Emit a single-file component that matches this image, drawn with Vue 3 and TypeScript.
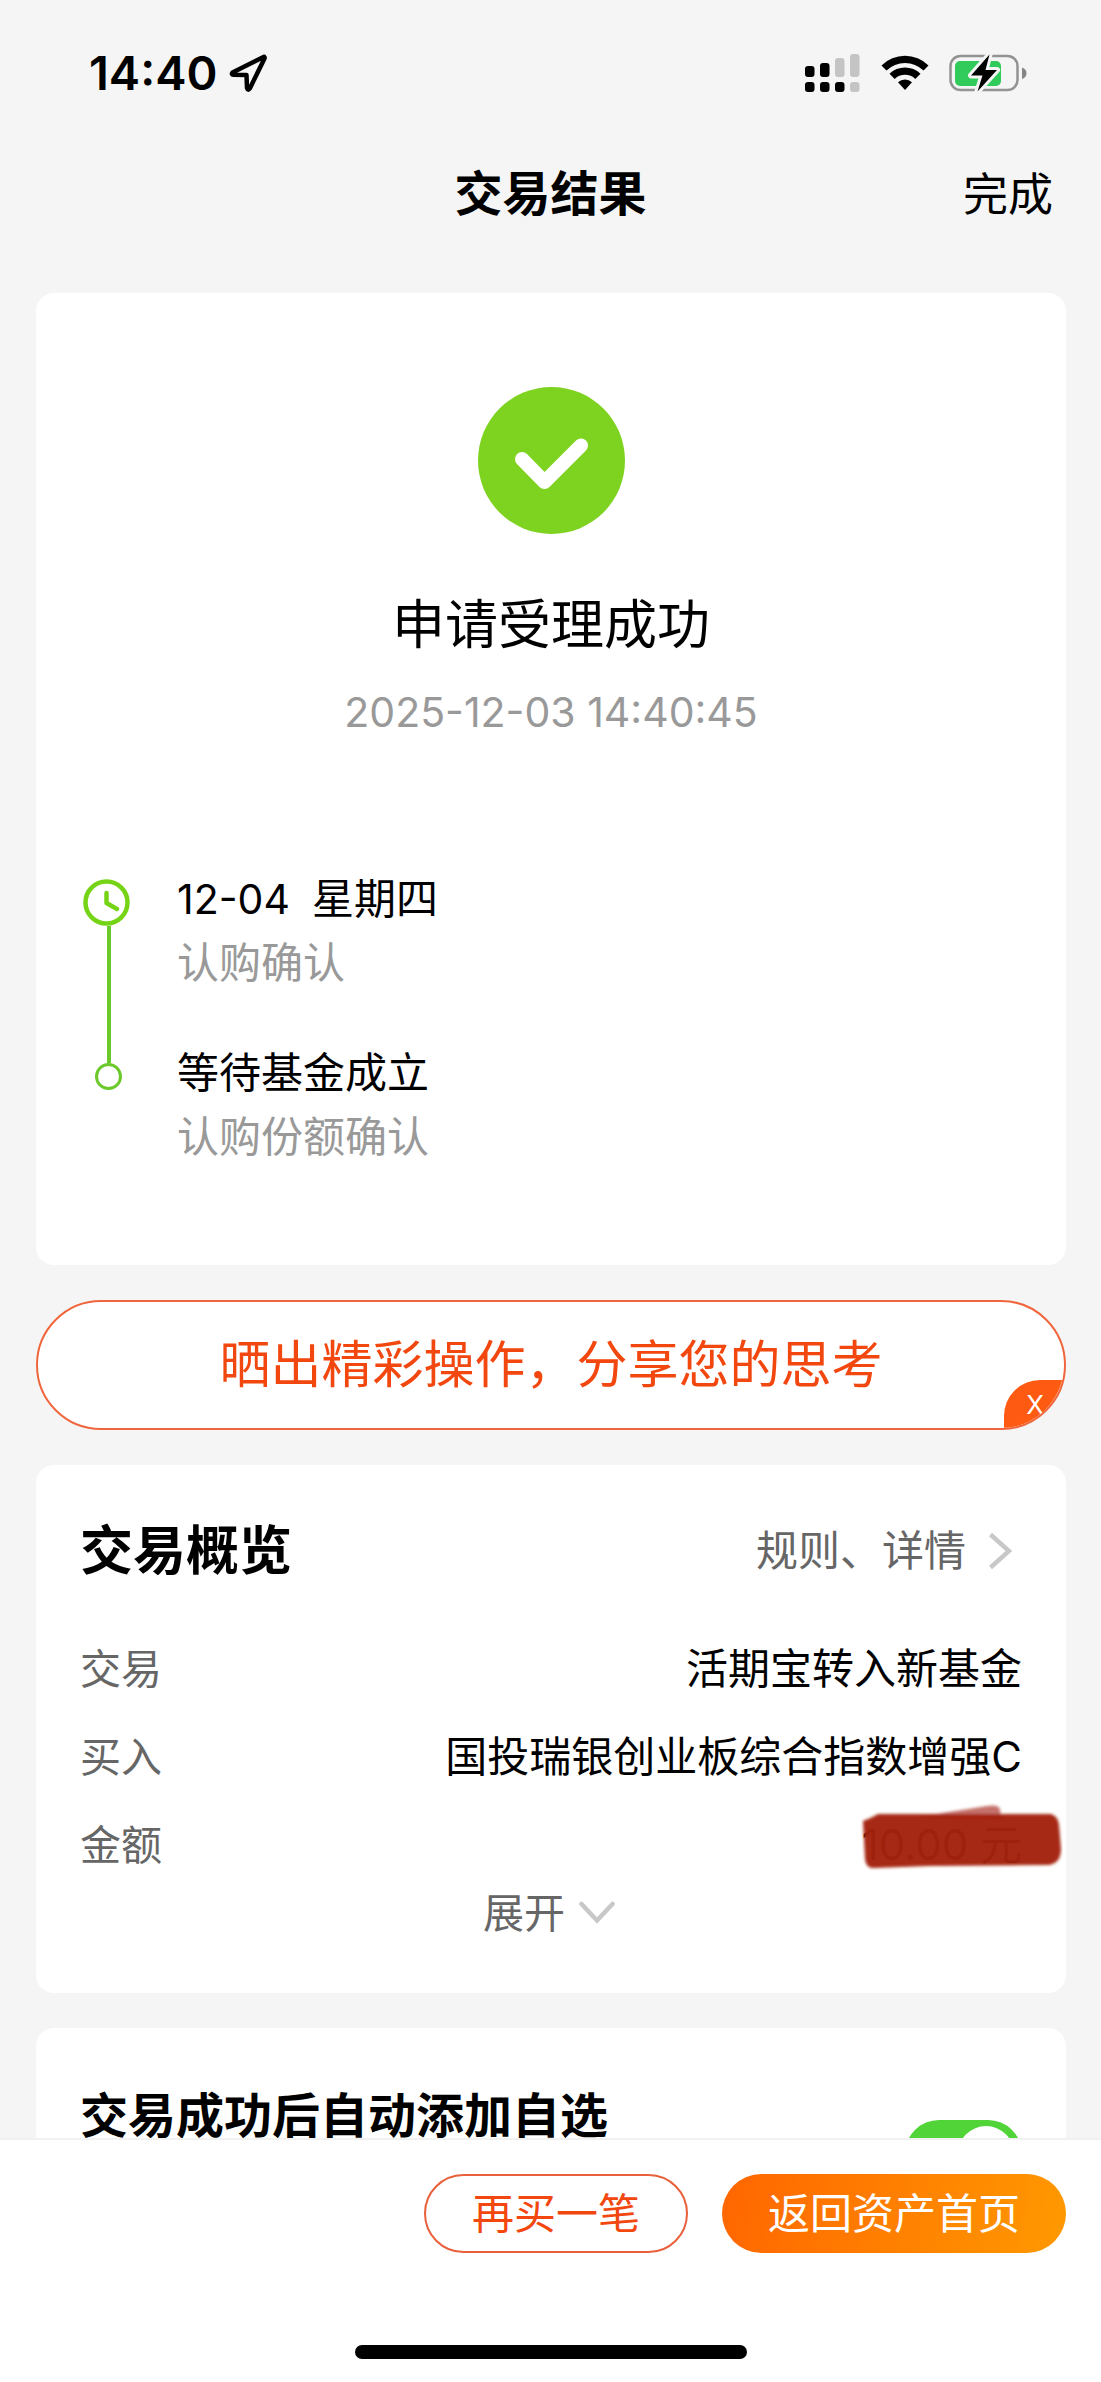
<script setup lang="ts">
import { ref } from 'vue'

interface Step {
  date?: string
  title: string
  note: string
}

interface Detail {
  label: string
  value: string
  masked?: boolean
}

const steps: Step[] = [
  { date: '12-04', title: '星期四', note: '认购确认' },
  { title: '等待基金成立', note: '认购份额确认' },
]

const details: Detail[] = [
  { label: '交易', value: '活期宝转入新基金' },
  { label: '买入', value: '国投瑞银创业板综合指数增强C' },
  { label: '金额', value: '10.00 元', masked: true },
]

const autoAdd = ref(true)
const shareVisible = ref(true)
</script>

<template>
  <div class="screen">
    <div class="status">
      <div class="status-left">
        <span class="clock">14:40</span>
        <svg class="locate" viewBox="0 0 38 38" aria-hidden="true">
          <path d="M34.500 3 L3.500 18.500 Q2 20.500 4.500 20.800 L17.500 21 L18 34 Q19 37 20.800 34.500 L35.500 4.500 Q36 2.500 34.500 3 Z" fill="none" stroke="#000" stroke-width="4.500" stroke-linejoin="round" />
        </svg>
      </div>
      <div class="status-right">
        <svg class="signal" viewBox="0 0 55 40" aria-hidden="true">
          <g fill="#000">
            <rect x="0" y="13" width="9.500" height="11" rx="3" />
            <rect x="15" y="10" width="9.500" height="14" rx="3" />
            <rect x="0" y="29" width="9.500" height="10" rx="3" />
            <rect x="15" y="29" width="9.500" height="10" rx="3" />
            <rect x="30" y="29" width="9.500" height="10" rx="3" />
          </g>
          <g fill="#c4c4c4">
            <rect x="30" y="5" width="9.500" height="19" rx="3" />
            <rect x="45" y="1" width="9.500" height="23" rx="3" />
            <rect x="45" y="29" width="9.500" height="10" rx="3" />
          </g>
        </svg>
        <svg class="wifi" viewBox="0 0 48 36" aria-hidden="true">
          <path d="M0.500 10.500 A33.500 33.500 0 0 1 47.500 10.500 L42.500 15.500 A26.500 26.500 0 0 0 5.500 15.500 Z" />
          <path d="M8.500 18.800 A22 22 0 0 1 39.500 18.800 L34.300 24 A14.700 14.700 0 0 0 13.700 24 Z" />
          <path d="M17 27.200 A10.500 10.500 0 0 1 31 27.200 L24 35 Z" />
        </svg>
        <svg class="battery" viewBox="0 0 78 40" aria-hidden="true">
          <rect x="1.500" y="3" width="67" height="34" rx="10" fill="none" stroke="#939393" stroke-width="2.500" />
          <path d="M73 14.500 Q77.500 16 77.500 20 Q77.500 24.500 73 26 Z" fill="#858585" />
          <rect x="6" y="8" width="46" height="25" rx="5" fill="#30cb5a" />
          <path d="M40.500 1.500 L22 22.500 H33.500 L28.500 38.500 L48 17 H36.500 Z" fill="#000" stroke="#f5f5f5" stroke-width="6" stroke-linejoin="round" paint-order="stroke" />
        </svg>
      </div>
    </div>

    <header class="nav">
      <h1>交易结果</h1>
      <button type="button" class="done">完成</button>
    </header>

    <main class="content">
      <section class="card result">
        <svg class="success" viewBox="0 0 147 147" role="img" aria-label="成功">
          <circle cx="73.500" cy="73.500" r="73.500" fill="#7ed321" />
          <path d="M44 72 L66.500 95 L103 58.500" fill="none" stroke="#fff" stroke-width="14" stroke-linecap="round" stroke-linejoin="round" />
        </svg>
        <h2 class="result-title">申请受理成功</h2>
        <time class="result-time" datetime="2025-12-03T14:40:45">2025-12-03 14:40:45</time>

        <ol class="timeline">
          <li v-for="(step, i) in steps" :key="step.title" class="step">
            <div class="marker" :class="{ first: i === 0 }">
              <template v-if="i === 0">
                <svg class="clock-icon" viewBox="0 0 47 47" aria-hidden="true">
                  <circle cx="23.500" cy="23.500" r="21" fill="none" stroke="#76d416" stroke-width="4.500" />
                  <path d="M23.500 14 V24 L34 30" fill="none" stroke="#76d416" stroke-width="4.500" stroke-linecap="round" stroke-linejoin="round" />
                </svg>
                <span class="line grow"></span>
              </template>
              <template v-else>
                <span class="line lead"></span>
                <span class="dot"></span>
              </template>
            </div>
            <div class="step-text">
              <p class="step-title">
                <span v-if="step.date" class="step-date">{{ step.date }}</span>
                <span>{{ step.title }}</span>
              </p>
              <p class="step-note">{{ step.note }}</p>
            </div>
          </li>
        </ol>
      </section>

      <div v-if="shareVisible" class="share">
        <a href="#share" class="share-link">晒出精彩操作，分享您的思考</a>
        <button type="button" class="share-close" aria-label="关闭" @click="shareVisible = false">X</button>
      </div>

      <section class="card overview">
        <div class="overview-head">
          <h2>交易概览</h2>
          <a href="#rules" class="rules">
            <span>规则、详情</span>
            <svg class="chevron-right" viewBox="0 0 24 38" aria-hidden="true">
              <path d="M2.500 2.500 L21 19 L2.500 35.500" fill="none" stroke="#c8c8c8" stroke-width="4.500" />
            </svg>
          </a>
        </div>
        <dl class="details">
          <div v-for="d in details" :key="d.label" class="detail">
            <dt>{{ d.label }}</dt>
            <dd>
              {{ d.value }}
              <svg v-if="d.masked" class="mask" viewBox="0 0 204 72" aria-hidden="true">
                <defs>
                  <filter id="brush" x="-5%" y="-10%" width="110%" height="120%">
                    <feGaussianBlur stdDeviation="1.500" />
                  </filter>
                </defs>
                <g filter="url(#brush)">
                  <path d="M58 16 L128 5 Q139 3 141 8 L142 18 Z" fill="#c4716a" />
                  <path d="M4 20 Q12 17 19 13 L192 13 Q199 15 200 24 L202 48 Q202 62 190 64 L70 65 L14 67 Q7 67 6 58 Z" fill="#a3220c" fill-opacity="0.970" />
                </g>
              </svg>
            </dd>
          </div>
        </dl>
        <button type="button" class="expand">
          <span>展开</span>
          <svg class="chevron-down" viewBox="0 0 36 24" aria-hidden="true">
            <path d="M2.500 3 L18 19.500 L33.500 3" fill="none" stroke="#c8c8c8" stroke-width="4.500" stroke-linecap="round" />
          </svg>
        </button>
      </section>

      <section class="card auto">
        <label for="auto-add">交易成功后自动添加自选</label>
        <input id="auto-add" v-model="autoAdd" type="checkbox" class="switch" />
      </section>
    </main>

    <footer class="footer">
      <div class="actions">
        <button type="button" class="btn outline">再买一笔</button>
        <button type="button" class="btn solid">返回资产首页</button>
      </div>
      <div class="home-bar"></div>
    </footer>
  </div>
</template>

<style>
body {
  background: #f5f5f5;
}
</style>

<style scoped>
.screen {
  display: flex;
  flex-direction: column;
  height: 100vh;
  background: #f5f5f5;
  color: #000;
  font-family: Inter, "Noto Sans CJK SC", sans-serif;
  font-size: 42px;
}
.screen * {
  box-sizing: border-box;
}
h1, h2, p, ol, dl, dd {
  margin: 0;
  padding: 0;
}
button {
  margin: 0;
  padding: 0;
  border: 0;
  background: none;
  color: inherit;
  font: inherit;
  cursor: pointer;
}
a {
  color: inherit;
  text-decoration: none;
}
svg {
  display: block;
  flex: none;
}

.status {
  display: flex;
  flex: none;
  align-items: center;
  justify-content: space-between;
  height: 146px;
  padding: 0 74px 0 89px;
}
.status-left,
.status-right {
  display: flex;
  align-items: center;
}
.status-left {
  gap: 12px;
}
.clock {
  font-size: 47px;
  font-weight: 600;
  line-height: 60px;
}
.locate {
  width: 38px;
  height: 38px;
}
.signal {
  width: 55px;
  height: 40px;
}
.wifi {
  width: 48px;
  height: 36px;
  margin-left: 21px;
}
.battery {
  width: 78px;
  height: 40px;
  margin-left: 20px;
}

.nav {
  display: grid;
  flex: none;
  grid-template-columns: 1fr auto 1fr;
  align-items: baseline;
  padding: 12px 48px 9px;
}
.nav h1 {
  grid-column: 2;
  font-size: 48px;
  font-weight: 700;
  line-height: 72px;
}
.done {
  justify-self: end;
  font-size: 45px;
  line-height: 72px;
}

.content {
  display: flex;
  flex: 1;
  flex-direction: column;
  gap: 35px;
  min-height: 0;
  padding: 53px 35px 35px 36px;
  overflow-y: auto;
  scrollbar-width: none;
}
.card {
  flex: none;
  border-radius: 18px;
  background: #fff;
}

.result {
  display: flex;
  flex-direction: column;
  align-items: center;
  padding: 94px 47px 96px;
}
.success {
  width: 147px;
  height: 147px;
}
.result-title {
  margin-top: 54px;
  font-size: 53px;
  font-weight: 400;
  line-height: 74px;
}
.result-time {
  margin-top: 20px;
  color: #999;
  font-size: 41px;
  line-height: 60px;
}
.timeline {
  align-self: stretch;
  margin-top: 125px;
  list-style: none;
}
.step {
  display: flex;
  gap: 43px;
}
.marker {
  display: flex;
  flex-direction: column;
  align-items: center;
  width: 51px;
}
.marker.first {
  padding-top: 12px;
}
.clock-icon {
  align-self: flex-start;
  width: 47px;
  height: 47px;
}
.line {
  width: 4px;
  background: #6cc92c;
}
.line.grow {
  flex: 1;
}
.line.lead {
  height: 22px;
}
.dot {
  width: 27px;
  height: 27px;
  border: 3px solid #6cc92c;
  border-radius: 50%;
}
.step:not(:last-child) .step-text {
  padding-bottom: 46px;
}
.step-text p {
  line-height: 64px;
}
.step-title {
  display: flex;
  align-items: baseline;
  gap: 22px;
}
.step-date {
  font-size: 41px;
}
.step-note {
  color: #999;
}

.share {
  position: relative;
  flex: none;
  overflow: hidden;
  border: 2px solid #f0663c;
  border-radius: 65px;
  background: #fff;
}
.share-link {
  display: block;
  color: #f2470f;
  font-size: 51px;
  line-height: 126px;
  text-align: center;
}
.share-close {
  position: absolute;
  right: -2px;
  bottom: -2px;
  width: 62px;
  height: 50px;
  border-top-left-radius: 36px;
  background: #ff5a12;
  color: #fff;
  font-size: 26px;
  line-height: 50px;
}

.overview {
  display: flex;
  flex-direction: column;
  padding: 50px 44px 56px;
}
.overview-head {
  display: flex;
  align-items: center;
  justify-content: space-between;
}
.overview-head h2 {
  font-size: 53px;
  font-weight: 700;
  line-height: 72px;
}
.rules {
  display: flex;
  align-items: center;
  gap: 22px;
  padding-right: 10px;
  color: #666;
  line-height: 72px;
}
.chevron-right {
  width: 24px;
  height: 38px;
}
.details {
  margin-top: 38px;
}
.detail {
  display: flex;
  justify-content: space-between;
  line-height: 88px;
}
.detail dt {
  color: #666;
  font-size: 41px;
}
.detail dd {
  position: relative;
}
.mask {
  position: absolute;
  top: 0;
  right: -41px;
  width: 204px;
  height: 72px;
}
.expand {
  display: flex;
  align-items: center;
  align-self: center;
  gap: 14px;
  padding-right: 4px;
  color: #666;
  font-size: 41px;
  line-height: 48px;
}
.chevron-down {
  width: 36px;
  height: 24px;
}

.auto {
  display: flex;
  align-items: flex-start;
  justify-content: space-between;
  padding: 52px 44px;
}
.auto label {
  font-size: 48px;
  font-weight: 700;
  line-height: 72px;
}
.switch {
  display: flex;
  align-items: center;
  width: 117px;
  height: 68px;
  margin: 40px 0 0;
  padding: 0 8px;
  border-radius: 34px;
  background: #d8d8d8;
  appearance: none;
  cursor: pointer;
}
.switch::before {
  width: 56px;
  height: 56px;
  border-radius: 50%;
  background: #fff;
  content: "";
}
.switch:checked {
  justify-content: flex-end;
  background: #51d438;
}

.footer {
  display: flex;
  flex: none;
  flex-direction: column;
  gap: 92px;
  padding: 34px 35px 23px;
  border-top: 2px solid #f1f1f1;
  background: #fff;
}
.actions {
  display: flex;
  justify-content: flex-end;
  gap: 34px;
}
.btn {
  height: 79px;
  padding: 0 46px;
  border-radius: 40px;
  line-height: 75px;
}
.outline {
  border: 2px solid #e8603c;
  color: #f2470f;
}
.solid {
  background: linear-gradient(100deg, #ff6600, #ff9900);
  color: #fff;
}
.home-bar {
  align-self: center;
  width: 392px;
  height: 14px;
  border-radius: 7px;
  background: #000;
}
</style>
